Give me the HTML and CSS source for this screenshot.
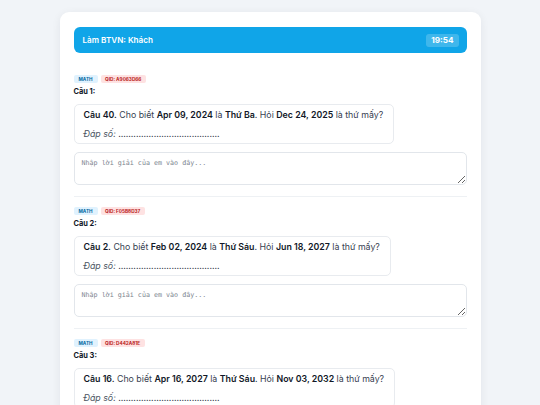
FILE: index.html
```html
<!DOCTYPE html>
<html lang="vi">
<head>
    <meta charset="UTF-8">
    <meta name="viewport" content="width=device-width, initial-scale=1.0">
    <title>Làm BTVN</title>
    <link rel="stylesheet" href="styles.css">
</head>
<body>
    <div class="card">
        <div class="topbar">
            <span class="title">Làm BTVN: Khách</span>
            <span class="timer">19:54</span>
        </div>

        <div class="list">
            <div class="question">
                <div class="tags">
                    <span class="tag tag-subject">Math</span>
                    <span class="tag tag-qid">QID: A9063D66</span>
                </div>
                <div class="label">Câu 1:</div>
                <div class="box">
                    <p class="prompt"><b>Câu 40.</b> Cho biết <b>Apr 09, 2024</b> là <b>Thứ Ba</b>. Hỏi <b>Dec 24, 2025</b> là thứ mấy?</p>
                    <p class="answer-line"><i>Đáp số:</i> ........................................</p>
                </div>
                <textarea class="answer" placeholder="Nhập lời giải của em vào đây..."></textarea>
            </div>

            <div class="question">
                <div class="tags">
                    <span class="tag tag-subject">Math</span>
                    <span class="tag tag-qid">QID: F05B8D37</span>
                </div>
                <div class="label">Câu 2:</div>
                <div class="box">
                    <p class="prompt"><b>Câu 2.</b> Cho biết <b>Feb 02, 2024</b> là <b>Thứ Sáu</b>. Hỏi <b>Jun 18, 2027</b> là thứ mấy?</p>
                    <p class="answer-line"><i>Đáp số:</i> ........................................</p>
                </div>
                <textarea class="answer" placeholder="Nhập lời giải của em vào đây..."></textarea>
            </div>

            <div class="question">
                <div class="tags">
                    <span class="tag tag-subject">Math</span>
                    <span class="tag tag-qid">QID: D442A81E</span>
                </div>
                <div class="label">Câu 3:</div>
                <div class="box">
                    <p class="prompt"><b>Câu 16.</b> Cho biết <b>Apr 16, 2027</b> là <b>Thứ Sáu</b>. Hỏi <b>Nov 03, 2032</b> là thứ mấy?</p>
                    <p class="answer-line"><i>Đáp số:</i> ........................................</p>
                </div>
                <textarea class="answer" placeholder="Nhập lời giải của em vào đây..."></textarea>
            </div>
        </div>
    </div>
</body>
</html>
```

FILE: styles.css
```css
body
{
    margin: 0;
    background: #f1f4f8;
    font-family: Inter, "Noto Sans", sans-serif;
    color: #1f2937;
}

.card
{
    box-sizing: border-box;
    width: 421px;
    margin: 12px auto 0;
    padding: 15px 14px 20px;
    background: #fff;
    border-radius: 9px;
    box-shadow: 0 2px 10px rgba(15, 23, 42, 0.07);
}

/* header bar */
.topbar
{
    display: flex;
    align-items: center;
    justify-content: space-between;
    height: 26px;
    padding: 0 8px 0 9px;
    background: #10a5e8;
    border-radius: 6px;
    color: #fff;
}

.title
{
    font-size: 8.1px;
    font-weight: 600;
}

.timer
{
    height: 13px;
    line-height: 13px;
    padding: 0 5px;
    border-radius: 3px;
    background: rgba(255, 255, 255, 0.2);
    font-size: 8.2px;
    font-weight: 700;
}

.list
{
    margin-top: 22px;
}

.question
{
    padding-bottom: 11px;
    margin-bottom: 10px;
    border-bottom: 1px solid #eef1f4;
}

.tags
{
    display: flex;
    gap: 3px;
}

.tag
{
    height: 8px;
    line-height: 8px;
    padding: 0 4.5px;
    border-radius: 2px;
    font-size: 4.7px;
    font-weight: 700;
    text-transform: uppercase;
}

.tag-subject
{
    background: #e0f2fe;
    color: #0369a1;
    padding: 0 5px;
}

.tag-qid
{
    background: #fee2e2;
    color: #b91c1c;
}

.label
{
    margin-top: 4px;
    font-size: 7.4px;
    line-height: 10px;
    font-weight: 700;
    color: #111827;
}

.box
{
    width: fit-content;
    margin-top: 7px;
    padding: 3px 10px 2px 9px;
    border: 1px solid #e8ebef;
    border-radius: 5px;
}

.box p
{
    margin: 0;
    font-size: 8.8px;
    line-height: 14px;
}

.prompt
{
    color: #374151;
}

.prompt b
{
    font-weight: 600;
    color: #111827;
}

.answer-line
{
    margin-top: 5px !important;
    color: #374151;
}

.answer-line i
{
    color: #4b5563;
}

.answer
{
    display: block;
    box-sizing: border-box;
    width: 100%;
    height: 33px;
    margin-top: 8px;
    padding: 6px 7px;
    border: 1px solid #e2e6eb;
    border-radius: 5px;
    font-family: "DejaVu Sans Mono", monospace;
    font-size: 6.7px;
    color: #374151;
}

.answer::placeholder
{
    color: #7d858f;
}
```
